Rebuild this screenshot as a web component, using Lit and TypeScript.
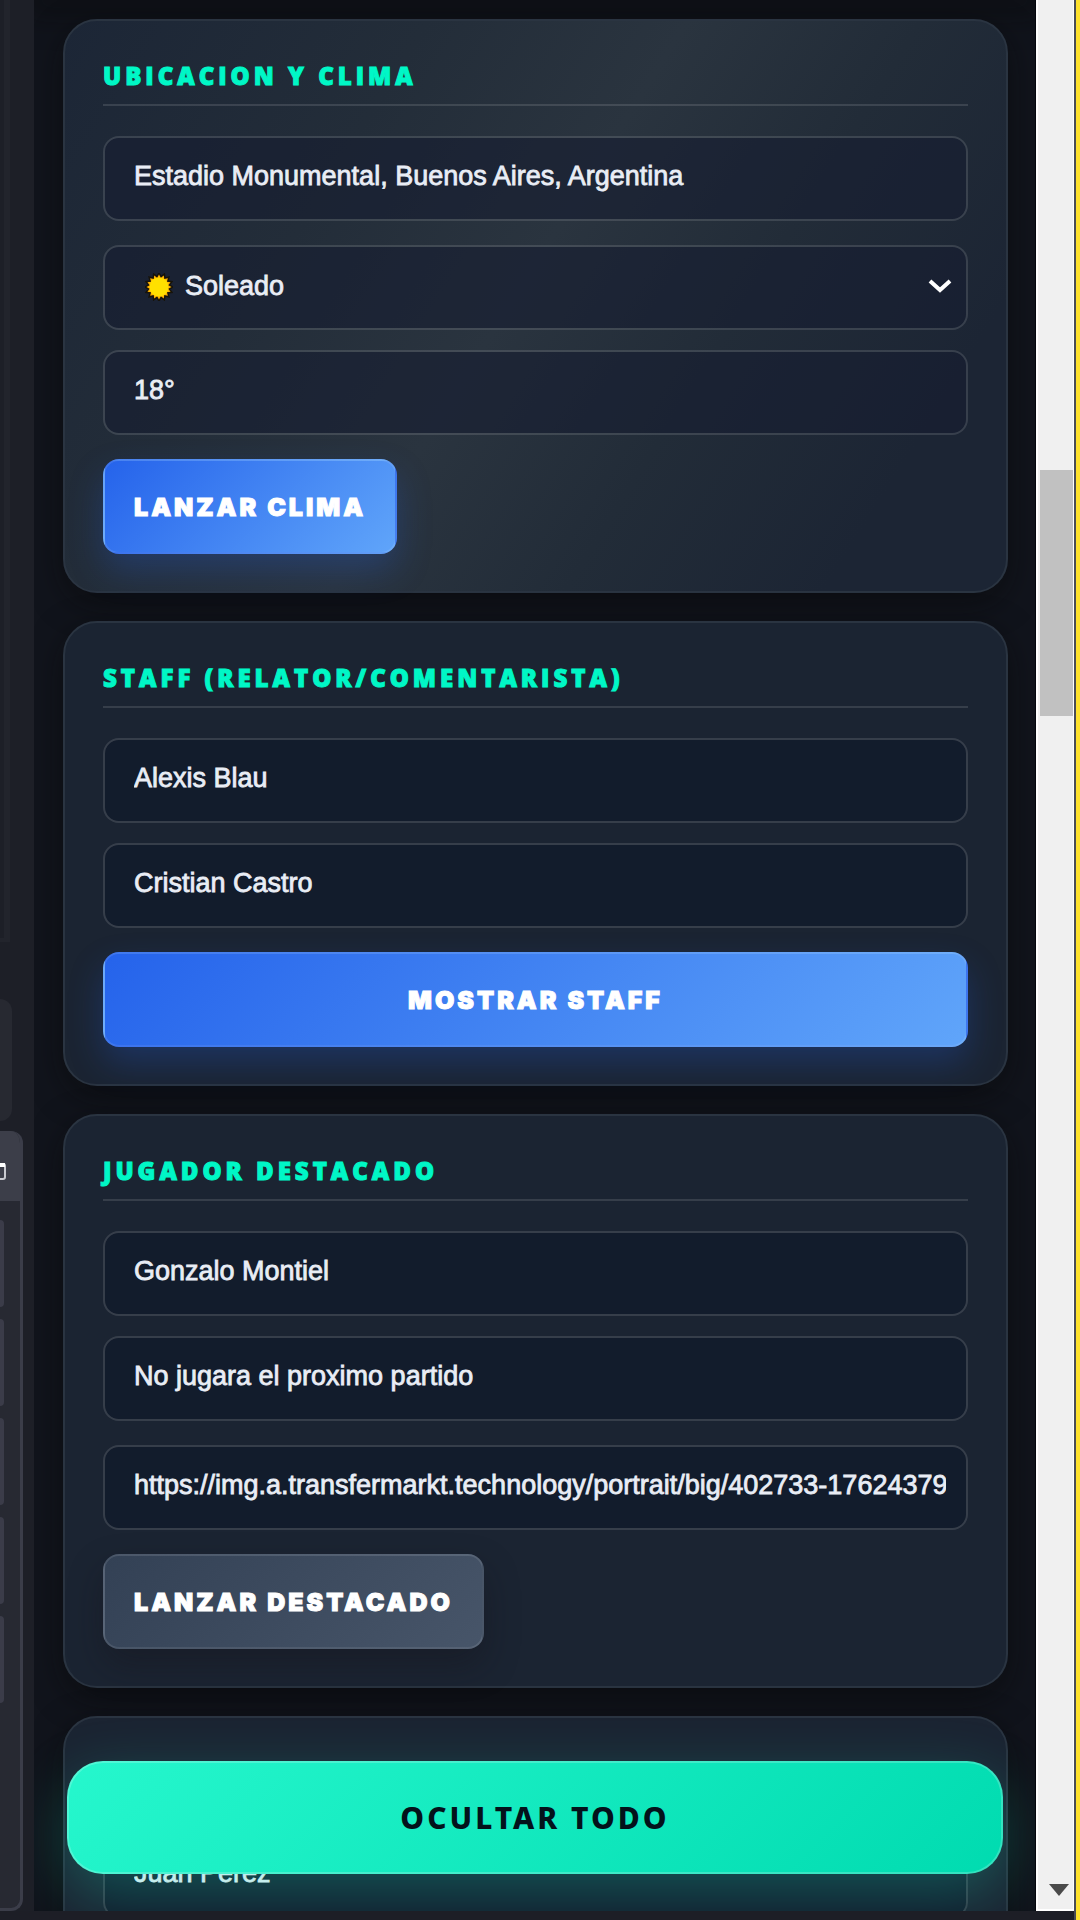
import { LitElement, html, css, nothing } from "lit";
import { customElement, property } from "lit/decorators.js";

type Field = { label: string; value: string; kind?: "select"; wide?: boolean };
type Group = {
  title: string;
  fields: Field[];
  action?: { text: string; tone: "blue" | "slate"; full?: boolean };
  lit?: boolean;
};

const GROUPS: Group[] = [
  {
    title: "UBICACION Y CLIMA",
    lit: true,
    fields: [
      { label: "Ubicacion", value: "Estadio Monumental, Buenos Aires, Argentina" },
      { label: "Clima", value: "Soleado", kind: "select", wide: true },
      { label: "Temperatura", value: "18°" },
    ],
    action: { text: "LANZAR CLIMA", tone: "blue" },
  },
  {
    title: "STAFF (RELATOR/COMENTARISTA)",
    fields: [
      { label: "Relator", value: "Alexis Blau" },
      { label: "Comentarista", value: "Cristian Castro" },
    ],
    action: { text: "MOSTRAR STAFF", tone: "blue", full: true },
  },
  {
    title: "JUGADOR DESTACADO",
    fields: [
      { label: "Jugador", value: "Gonzalo Montiel" },
      { label: "Detalle", value: "No jugara el proximo partido" },
      {
        label: "Imagen",
        value: "https://img.a.transfermarkt.technology/portrait/big/402733-17624379",
        wide: true,
      },
    ],
    action: { text: "LANZAR DESTACADO", tone: "slate" },
  },
  { title: "", fields: [{ label: "Nombre", value: "Juan Perez" }] },
];

@customElement("control-card")
class ControlCard extends LitElement {
  @property({ attribute: false }) group!: Group;

  static styles = css`
    :host {
      display: block;
    }
    .card {
      box-sizing: border-box;
      display: flex;
      flex-direction: column;
      padding: 34px 38px 37px;
      border: 2px solid #2a3441;
      border-radius: 34px;
      background: #1b2432;
      box-shadow: 0 10px 32px rgba(8, 8, 8, 0.5);
    }
    .lit {
      background: linear-gradient(122deg, #1c2636 0%, #232d39 28%, #2a343f 48%, #222c38 66%, #1c2534 86%);
    }
    .title {
      box-sizing: border-box;
      height: 51px;
      margin: 0 0 30px;
      border-bottom: 2px solid rgba(255, 255, 255, 0.12);
      color: #00f7c6;
      font: 800 24px/41px "Open Sans", "Noto Sans", sans-serif;
      letter-spacing: 4px;
      white-space: nowrap;
      -webkit-text-stroke: 1px #00f7c6;
    }
    .field {
      position: relative;
      display: flex;
      margin-bottom: 20px;
    }
    .before-wide,
    .last {
      margin-bottom: 24px;
    }
    .control {
      box-sizing: border-box;
      width: 100%;
      height: 85px;
      margin: 0;
      padding: 0 20px 4px 29px;
      border: 2px solid rgba(255, 255, 255, 0.12);
      border-radius: 16px;
      outline: none;
      background: rgba(14, 23, 40, 0.6);
      background-clip: padding-box;
      color: #e9edf5;
      font: 400 27px/36px "Liberation Sans", Arial, sans-serif;
      -webkit-text-stroke: 0.8px #e9edf5;
      appearance: none;
    }
    .lit .control {
      background-color: rgba(21, 29, 48, 0.6);
    }
    .select {
      padding-left: 80px;
    }
    .sun,
    .chevron {
      position: absolute;
      top: 0;
      bottom: 2px;
      margin: auto 0;
      pointer-events: none;
    }
    .sun {
      left: 42px;
    }
    .chevron {
      right: 16px;
    }
    .action {
      box-sizing: border-box;
      align-self: flex-start;
      height: 95px;
      padding: 0 29px;
      border: 2px solid rgba(255, 255, 255, 0.1);
      border-radius: 16px;
      color: #fff;
      font: 900 25px/32px Inter, "Liberation Sans", sans-serif;
      letter-spacing: 3px;
      white-space: nowrap;
      -webkit-text-stroke: 1px #fff;
    }
    .full {
      align-self: stretch;
    }
    .blue {
      background-image: linear-gradient(135deg, #2563eb, #60a5fa);
      box-shadow: 0 16px 34px rgba(37, 99, 235, 0.25);
    }
    .slate {
      background-image: linear-gradient(135deg, #334155, #475569);
      box-shadow: 0 16px 34px rgba(20, 16, 24, 0.35);
    }
  `;

  private rays() {
    const pts: string[] = [];
    for (let i = 0; i < 32; i++) {
      const r = i % 2 ? 9.5 : 12.5;
      const a = (i * Math.PI) / 16;
      pts.push(`${(14 + r * Math.cos(a)).toFixed(2)},${(14 + r * Math.sin(a)).toFixed(2)}`);
    }
    return pts.join(" ");
  }

  private control(f: Field) {
    if (f.kind !== "select") {
      return html`<input class="control" type="text" aria-label=${f.label} .value=${f.value} />`;
    }
    return html`<select class="control select" aria-label=${f.label}>
        <option>${f.value}</option>
      </select>
      <svg class="sun" width="28" height="28" viewBox="0 0 28 28" aria-hidden="true">
        <polygon points=${this.rays()} fill="#ffb400" stroke="#17130a" stroke-width="3" paint-order="stroke" />
        <circle cx="14" cy="14" r="9.5" fill="#ffe000" />
      </svg>
      <svg class="chevron" width="24" height="16" viewBox="0 0 24 16" aria-hidden="true">
        <path d="M2 2 L12 11 L22 2" fill="none" stroke="#fff" stroke-width="4" />
      </svg>`;
  }

  render() {
    const g = this.group;
    return html`<section class="card ${g.lit ? "lit" : ""}">
      <h2 class="title">${g.title}</h2>
      ${g.fields.map((f, i) => {
        const next = g.fields[i + 1];
        const gap = !next ? "last" : next.wide ? "before-wide" : "";
        return html`<div class="field ${gap}">${this.control(f)}</div>`;
      })}
      ${g.action
        ? html`<button type="button" class="action ${g.action.tone} ${g.action.full ? "full" : ""}">
            ${g.action.text}
          </button>`
        : nothing}
    </section>`;
  }
}

@customElement("app-root")
class AppRoot extends LitElement {
  static styles = css`
    :host {
      display: block;
    }
    .shell {
      display: grid;
      grid-template-columns: 34px minmax(0, 1fr) 38px 6px;
      grid-template-rows: minmax(0, 1fr) 9px;
      height: 100vh;
      overflow: hidden;
      background: #1d1e26;
    }
    .rail {
      display: flex;
      flex-direction: column;
      align-items: flex-start;
      background: #1d1f27;
    }
    .preview {
      box-sizing: border-box;
      flex: 0 0 942px;
      width: 10px;
      border-right: 6px solid #22242c;
      border-bottom: 4px solid #22242c;
    }
    .chip {
      flex: 0 0 122px;
      width: 12px;
      margin: 57px 0 10px;
      border-radius: 0 12px 12px 0;
      background: #272931;
    }
    .dock {
      box-sizing: border-box;
      flex: 1;
      width: 23px;
      border: solid #3b3d49;
      border-width: 0 3px 3px 0;
      border-radius: 0 12px 12px 0;
      background: #272932;
      overflow: hidden;
    }
    .dock-head {
      box-sizing: border-box;
      height: 70px;
      padding-top: 12px;
      display: flex;
      align-items: center;
      background: #3c3e49;
      margin-bottom: 19px;
    }
    .dock-row {
      width: 4px;
      height: 87px;
      margin-bottom: 12px;
      border-radius: 0 8px 8px 0;
      background: #3b3c49;
    }
    .panel {
      position: relative;
      min-height: 0;
      overflow: hidden;
      background: #11141c;
      border-right: 1px solid #04060c;
    }
    .list {
      display: flex;
      flex-direction: column;
      gap: 28px;
      padding: 19px 27px 0 29px;
    }
    .above {
      box-shadow: 0 0 32px 12px rgba(8, 8, 8, 0.5);
    }
    .hide-all {
      position: absolute;
      left: 33px;
      right: 32px;
      bottom: 37px;
      box-sizing: border-box;
      height: 113px;
      border: 2px solid rgba(255, 255, 255, 0.2);
      border-radius: 36px;
      background-image: linear-gradient(135deg, #26f7cd, #00dbb0);
      background-origin: border-box;
      box-shadow: 0 20px 60px rgba(28, 245, 205, 0.26);
      color: #03121b;
      font: 800 30px/40px "Noto Sans", "Open Sans", sans-serif;
      letter-spacing: 3px;
    }
    .scroll {
      display: grid;
      grid-template-rows: 470fr 247fr 1194fr;
      border: solid #fff;
      border-width: 0 1px 2px 2px;
      background: #f0f0f0;
    }
    .thumb {
      grid-row: 2;
      margin-left: 2px;
      background: #c1c1c1;
    }
    .down {
      grid-row: 3;
      align-self: end;
      justify-self: end;
      margin: 0 4px 13px 0;
    }
    .edge {
      grid-column: 4;
      grid-row: 1 / 3;
      border-left: 2px solid #4a4c55;
      background: #ffe22c;
    }
  `;

  render() {
    return html`<div class="shell">
      <aside class="rail">
        <div class="preview"></div>
        <div class="chip"></div>
        <div class="dock">
          <div class="dock-head">
            <svg width="8" height="24" viewBox="0 0 8 24" aria-hidden="true">
              <path d="M0 4 H3 Q5 4 5 6 V17 Q5 19 3 19 H0" fill="none" stroke="#c9cad0" stroke-width="2" />
              <path d="M0 5 H5" stroke="#fff" stroke-width="4" />
            </svg>
          </div>
          ${[0, 1, 2, 3, 4].map(() => html`<div class="dock-row"></div>`)}
        </div>
      </aside>
      <main class="panel">
        <div class="above"></div>
        <div class="list">
          ${GROUPS.map((g) => html`<control-card .group=${g}></control-card>`)}
        </div>
        <button type="button" class="hide-all">OCULTAR TODO</button>
      </main>
      <div class="scroll">
        <div class="thumb"></div>
        <svg class="down" width="20" height="12" viewBox="0 0 20 12" aria-hidden="true">
          <path d="M0 0 H20 L10 12 Z" fill="#4a4a4a" />
        </svg>
      </div>
      <div class="edge"></div>
    </div>`;
  }
}
